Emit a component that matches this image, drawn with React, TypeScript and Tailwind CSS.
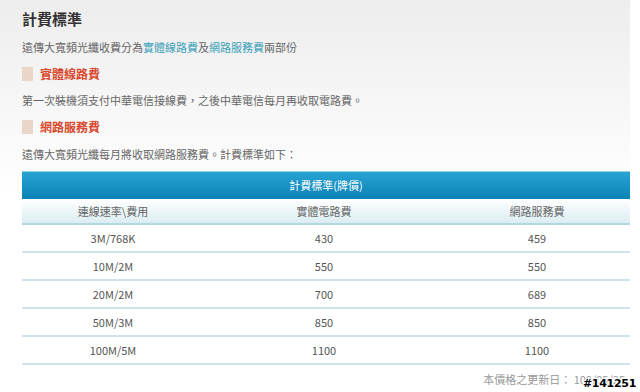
const rows = [
  { speed: '3M/768K', line: '430', service: '459' },
  { speed: '10M/2M', line: '550', service: '550' },
  { speed: '20M/2M', line: '700', service: '689' },
  { speed: '50M/3M', line: '850', service: '850' },
  { speed: '100M/5M', line: '1100', service: '1100' },
];

const SectionTitle = ({ children }: { children: string }) => (
  <div className="flex items-center gap-[7px] h-[14px]">
    <span className="w-[11px] h-[14px] bg-[#e9d6c9] shrink-0" />
    <span className="text-[12px] font-bold text-[#d8482d] leading-none">{children}</span>
  </div>
);

export default function App() {
  return (
    <div className="relative w-[640px] h-[392px] overflow-hidden bg-white font-['Noto_Sans_CJK_TC','Liberation_Sans',sans-serif]">
      <div className="w-[630px] h-[392px] bg-gradient-to-b from-[#ededed] via-white to-white pl-[22px] pt-[10px]">
        <h1 className="text-[15px] font-bold text-[#333] leading-[18px]">計費標準</h1>

        <p className="mt-[12px] text-[11px] text-[#666] leading-[14px]">
          遠傳大寬頻光纖收費分為<span className="text-[#3aa0b8]">實體線路費</span>及<span className="text-[#3aa0b8]">網路服務費</span>兩部份
        </p>

        <div className="mt-[13px]">
          <SectionTitle>實體線路費</SectionTitle>
        </div>

        <p className="mt-[12px] text-[11px] text-[#666] leading-[14px]">
          第一次裝機須支付中華電信接線費，之後中華電信每月再收取電路費。
        </p>

        <div className="mt-[13px]">
          <SectionTitle>網路服務費</SectionTitle>
        </div>

        <p className="mt-[13px] text-[11px] text-[#666] leading-[14px]">
          遠傳大寬頻光纖每月將收取網路服務費。計費標準如下：
        </p>

        <div className="mt-[10px] w-[608px]">
          <div className="h-[28px] flex items-center justify-center border-t border-[#8fd2e6] bg-gradient-to-b from-[#27a4d4] to-[#0a82b4] text-white text-[11px]">
            計費標準(牌價)
          </div>
          <div className="h-[26px] grid grid-cols-[182px_240px_1fr] items-center text-center text-[11px] text-[#666] bg-gradient-to-b from-white to-[#dbedf2] border-b-2 border-[#b3d8e2]">
            <span>連線速率\費用</span>
            <span>實體電路費</span>
            <span>網路服務費</span>
          </div>
          {rows.map((r) => (
            <div
              key={r.speed}
              className="h-[28px] grid grid-cols-[182px_240px_1fr] items-center text-center text-[11px] text-[#555] border-b-2 border-[#cfe3e8]"
            >
              <span>{r.speed}</span>
              <span>{r.line}</span>
              <span>{r.service}</span>
            </div>
          ))}
          <div className="mt-[7px] pr-[5px] text-right text-[11px] text-[#999] leading-[14px]">
            本價格之更新日： 100/05/25
          </div>
        </div>
      </div>

      <div className="absolute right-[4px] bottom-[3px] text-[11px] font-bold text-black font-['DejaVu_Sans',sans-serif] leading-none tracking-[-0.3px] [text-shadow:-1px_-1px_0_#fff,1px_-1px_0_#fff,-1px_1px_0_#fff,1px_1px_0_#fff]">
        #141251
      </div>
    </div>
  );
}
